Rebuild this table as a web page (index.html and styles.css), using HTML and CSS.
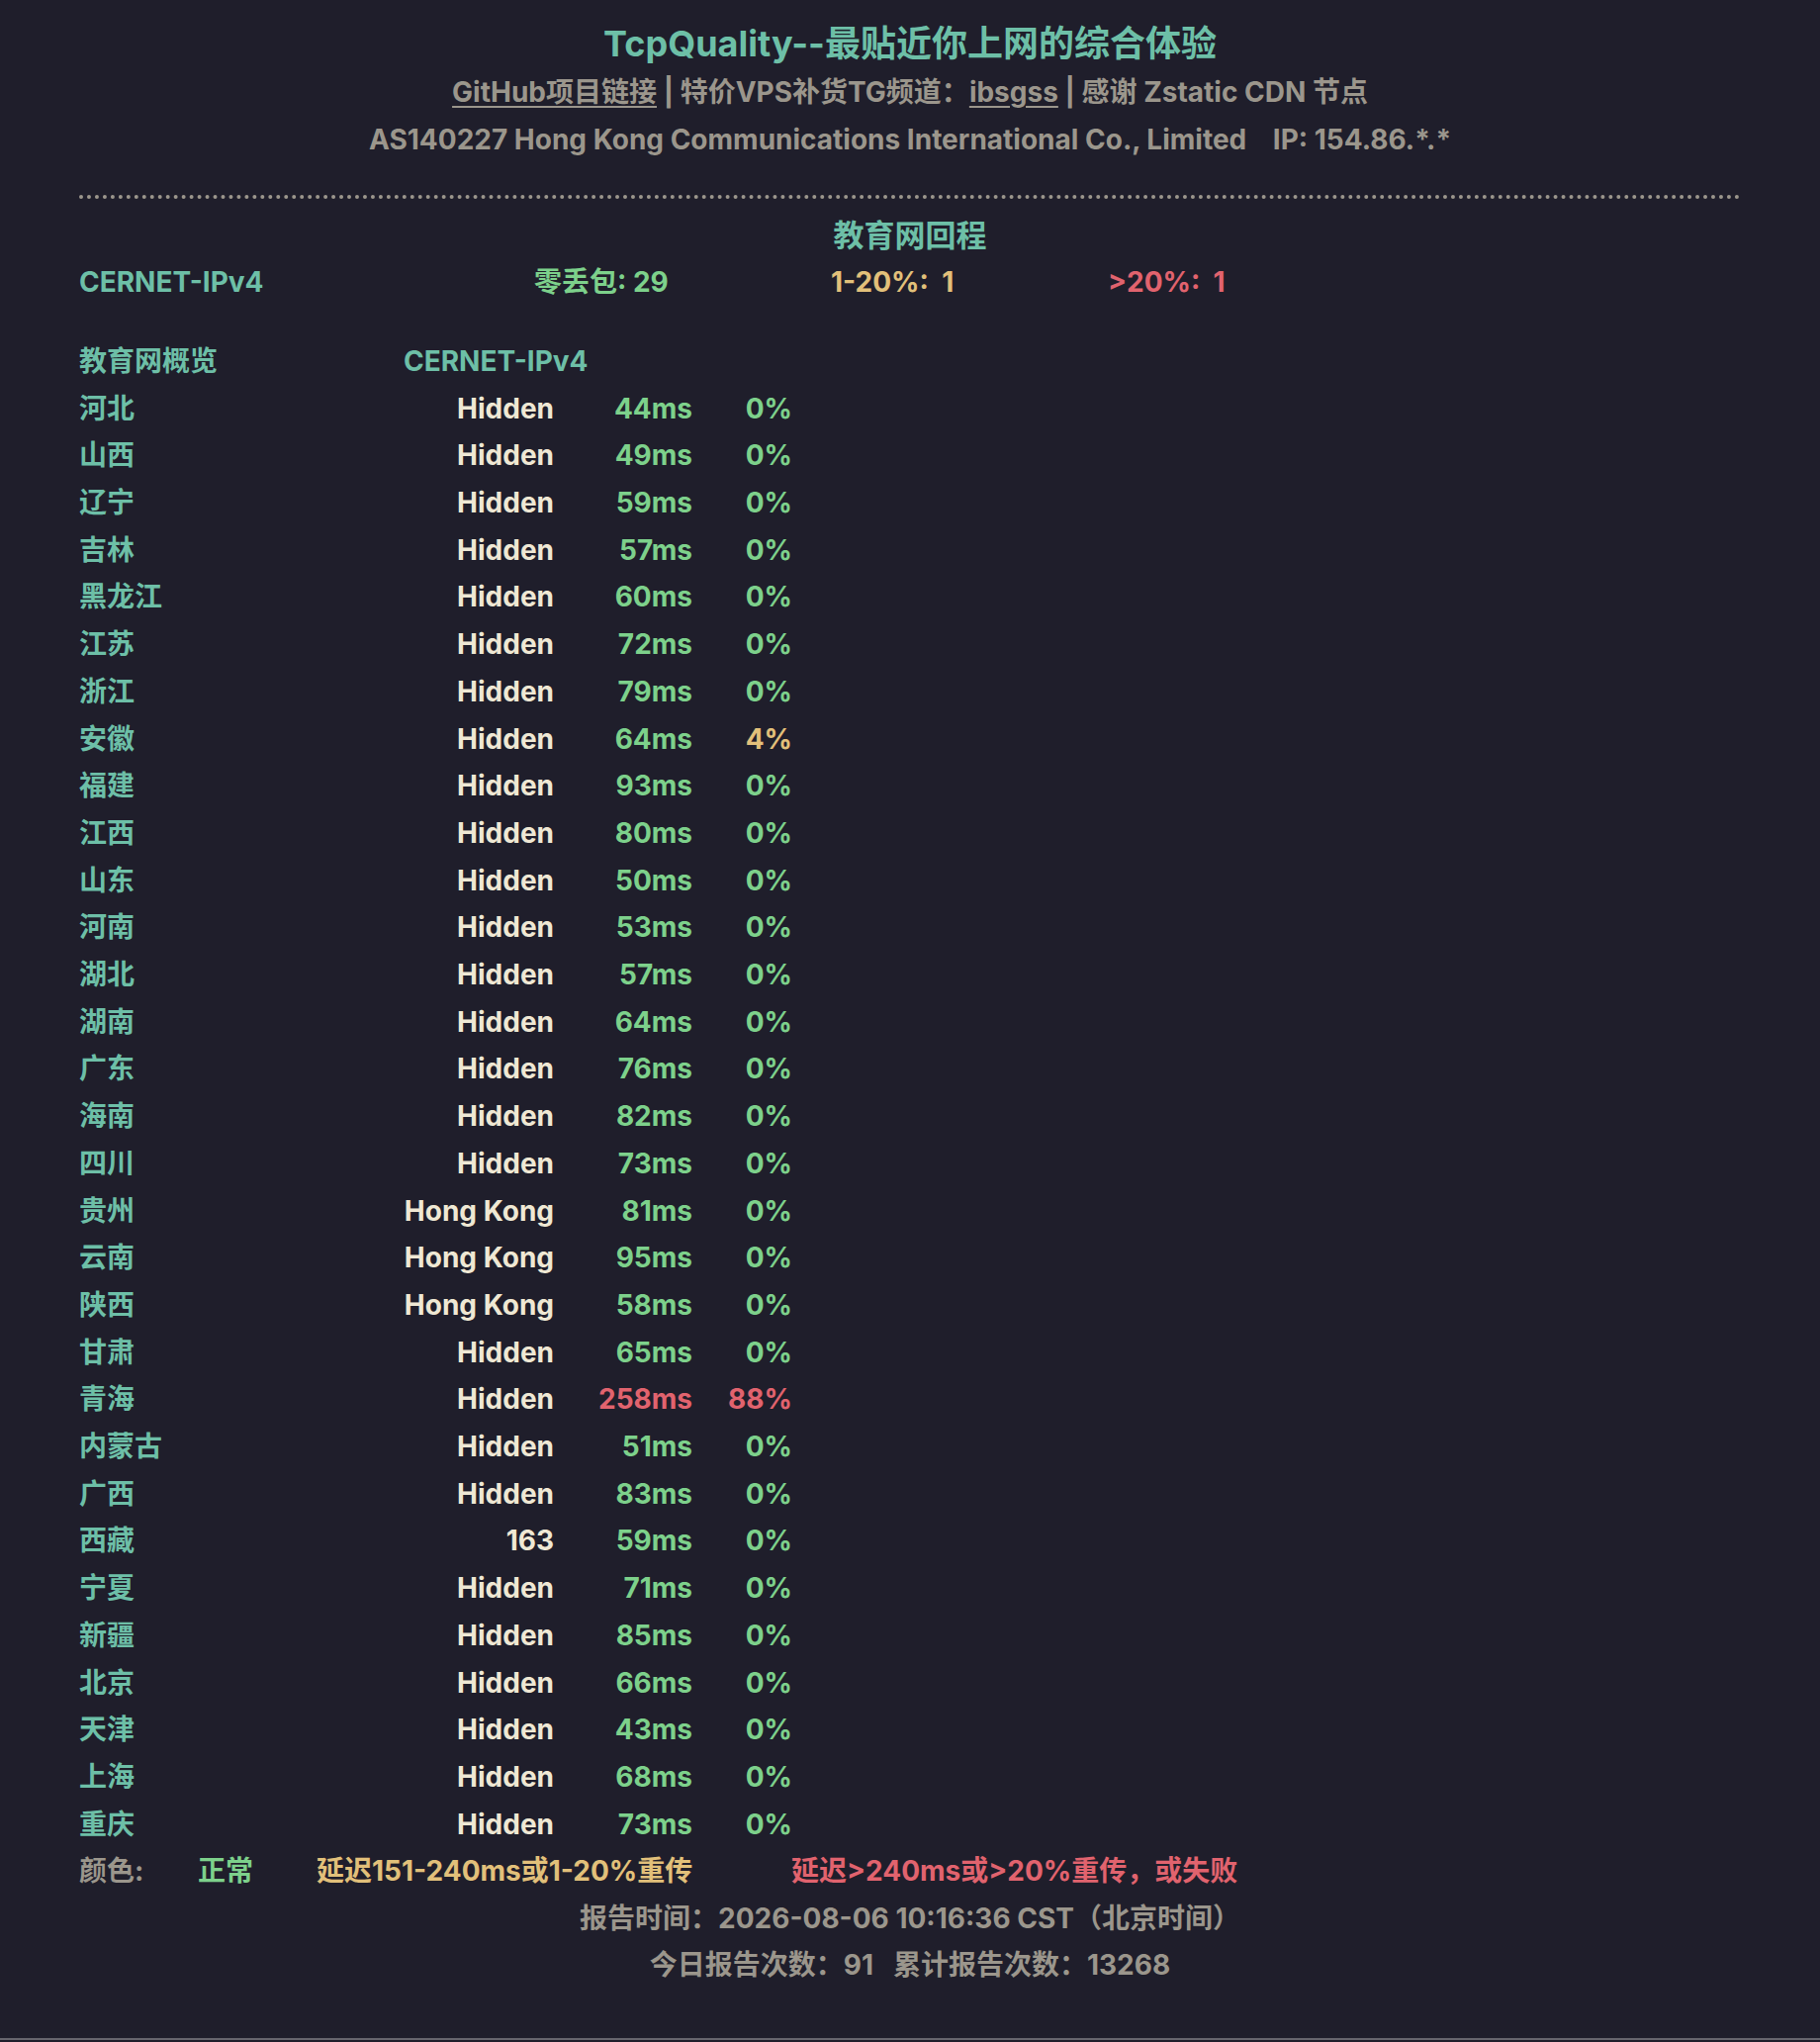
FILE: index.html
```html
<!DOCTYPE html>
<html lang="zh-CN">
<head>
<meta charset="utf-8">
<title>TcpQuality</title>
<link rel="stylesheet" href="styles.css">
</head>
<body>
<div class="page">
  <header class="head">
    <h1 class="title">TcpQuality--最贴近你上网的综合体验</h1>
    <p class="line links"><a class="lnk" href="#">GitHub项目链接</a> | 特价VPS补货TG频道：<a class="lnk" href="#">ibsgss</a> | 感谢 Zstatic CDN 节点</p>
    <p class="line">AS140227 Hong Kong Communications International Co., Limited&nbsp;&nbsp;&nbsp; IP: 154.86.*.*</p>
  </header>
  <div class="rule"></div>
  <h2 class="sect">教育网回程</h2>
  <div class="summary">
    <span class="s-name teal">CERNET-IPv4</span>
    <span class="s-a green">零丢包: 29</span>
    <span class="s-b yellow">1-20%:&nbsp; 1</span>
    <span class="s-c red">&gt;20%:&nbsp; 1</span>
  </div>
  <div class="grid">
    <div class="gh teal">教育网概览</div><div class="gh2 teal">CERNET-IPv4</div>
    <div class="p">河北</div><div class="n">Hidden</div><div class="l green">44ms</div><div class="r green">0%</div>
    <div class="p">山西</div><div class="n">Hidden</div><div class="l green">49ms</div><div class="r green">0%</div>
    <div class="p">辽宁</div><div class="n">Hidden</div><div class="l green">59ms</div><div class="r green">0%</div>
    <div class="p">吉林</div><div class="n">Hidden</div><div class="l green">57ms</div><div class="r green">0%</div>
    <div class="p">黑龙江</div><div class="n">Hidden</div><div class="l green">60ms</div><div class="r green">0%</div>
    <div class="p">江苏</div><div class="n">Hidden</div><div class="l green">72ms</div><div class="r green">0%</div>
    <div class="p">浙江</div><div class="n">Hidden</div><div class="l green">79ms</div><div class="r green">0%</div>
    <div class="p">安徽</div><div class="n">Hidden</div><div class="l green">64ms</div><div class="r yellow">4%</div>
    <div class="p">福建</div><div class="n">Hidden</div><div class="l green">93ms</div><div class="r green">0%</div>
    <div class="p">江西</div><div class="n">Hidden</div><div class="l green">80ms</div><div class="r green">0%</div>
    <div class="p">山东</div><div class="n">Hidden</div><div class="l green">50ms</div><div class="r green">0%</div>
    <div class="p">河南</div><div class="n">Hidden</div><div class="l green">53ms</div><div class="r green">0%</div>
    <div class="p">湖北</div><div class="n">Hidden</div><div class="l green">57ms</div><div class="r green">0%</div>
    <div class="p">湖南</div><div class="n">Hidden</div><div class="l green">64ms</div><div class="r green">0%</div>
    <div class="p">广东</div><div class="n">Hidden</div><div class="l green">76ms</div><div class="r green">0%</div>
    <div class="p">海南</div><div class="n">Hidden</div><div class="l green">82ms</div><div class="r green">0%</div>
    <div class="p">四川</div><div class="n">Hidden</div><div class="l green">73ms</div><div class="r green">0%</div>
    <div class="p">贵州</div><div class="n">Hong Kong</div><div class="l green">81ms</div><div class="r green">0%</div>
    <div class="p">云南</div><div class="n">Hong Kong</div><div class="l green">95ms</div><div class="r green">0%</div>
    <div class="p">陕西</div><div class="n">Hong Kong</div><div class="l green">58ms</div><div class="r green">0%</div>
    <div class="p">甘肃</div><div class="n">Hidden</div><div class="l green">65ms</div><div class="r green">0%</div>
    <div class="p">青海</div><div class="n">Hidden</div><div class="l red">258ms</div><div class="r red">88%</div>
    <div class="p">内蒙古</div><div class="n">Hidden</div><div class="l green">51ms</div><div class="r green">0%</div>
    <div class="p">广西</div><div class="n">Hidden</div><div class="l green">83ms</div><div class="r green">0%</div>
    <div class="p">西藏</div><div class="n">163</div><div class="l green">59ms</div><div class="r green">0%</div>
    <div class="p">宁夏</div><div class="n">Hidden</div><div class="l green">71ms</div><div class="r green">0%</div>
    <div class="p">新疆</div><div class="n">Hidden</div><div class="l green">85ms</div><div class="r green">0%</div>
    <div class="p">北京</div><div class="n">Hidden</div><div class="l green">66ms</div><div class="r green">0%</div>
    <div class="p">天津</div><div class="n">Hidden</div><div class="l green">43ms</div><div class="r green">0%</div>
    <div class="p">上海</div><div class="n">Hidden</div><div class="l green">68ms</div><div class="r green">0%</div>
    <div class="p">重庆</div><div class="n">Hidden</div><div class="l green">73ms</div><div class="r green">0%</div>
  </div>
  <div class="legend">
    <span class="lg-k gray">颜色:</span>
    <span class="lg-a green">正常</span>
    <span class="lg-b yellow">延迟151-240ms或1-20%重传</span>
    <span class="lg-c red">延迟&gt;240ms或&gt;20%重传，或失败</span>
  </div>
  <p class="foot">报告时间：2026-08-06 10:16:36 CST（北京时间）</p>
  <p class="foot">今日报告次数：91&nbsp;&nbsp; 累计报告次数：13268</p>
</div>
</body>
</html>
```

FILE: styles.css
```css
html, body {
  margin: 0;
  padding: 0;
  background: #1f1e2b;
}
body {
  font-family: Inter, "Noto Sans CJK SC", sans-serif;
  font-weight: 700;
  font-size: 28px;
  line-height: 47.6px;
  color: #9b968c;
  min-height: 2062px;
  border-bottom: 2px solid #66656d;
  box-sizing: border-box;
}
.page {
  width: 1680px;
  margin: 0 auto;
  padding-top: 18px;
}
.head { text-align: center; }
.title {
  margin: 0;
  font-size: 36px;
  line-height: 52px;
  font-weight: 700;
  color: #6dbfa7;
}
.line { margin: 0; }
.lnk { color: #9b968c; text-decoration: underline; text-underline-offset: 4px; }
.rule {
  margin-top: 32px;
  border-top: 4px dotted #9b968c;
}
.sect {
  margin: 13px 0 0;
  text-align: center;
  font-size: 31px;
  line-height: 47.6px;
  font-weight: 700;
  color: #6dbfa7;
}
.summary {
  display: grid;
  grid-template-columns: 460px 300px 280px 280px;
}
.grid {
  margin-top: 32.5px;
  display: grid;
  grid-template-columns: 328px 152px 140px 101px;
  line-height: 47.7px;
}
.gh2 { grid-column: 2 / 5; }
.p { color: #6dbfa7; }
.n { color: #efe8d4; text-align: right; }
.l, .r { text-align: right; }
.legend {
  display: grid;
  grid-template-columns: 120px 120px 480px auto;
  line-height: 47.4px;
}
.foot { margin: 0; text-align: center; line-height: 47.4px; }
.teal { color: #6dbfa7; }
.green { color: #7dd18b; }
.yellow { color: #e2c07a; }
.red { color: #e1636e; }
.gray { color: #9b968c; }
```
